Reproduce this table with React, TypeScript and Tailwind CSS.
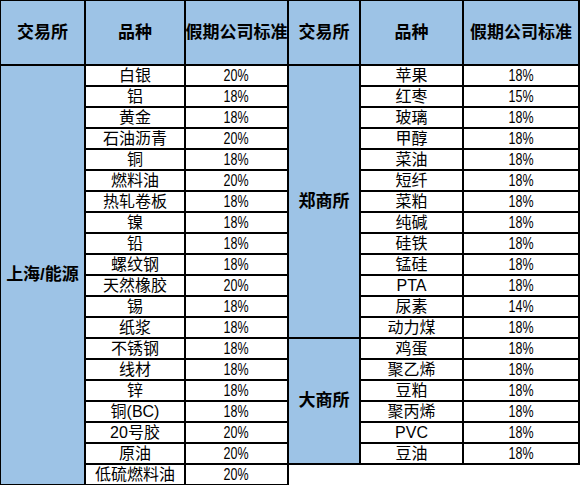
import React from "react"

const shfe: [string, string][] = [
  ["白银", "20%"],
  ["铝", "18%"],
  ["黄金", "18%"],
  ["石油沥青", "20%"],
  ["铜", "18%"],
  ["燃料油", "20%"],
  ["热轧卷板", "18%"],
  ["镍", "18%"],
  ["铅", "18%"],
  ["螺纹钢", "18%"],
  ["天然橡胶", "20%"],
  ["锡", "18%"],
  ["纸浆", "18%"],
  ["不锈钢", "18%"],
  ["线材", "18%"],
  ["锌", "18%"],
  ["铜(BC)", "18%"],
  ["20号胶", "20%"],
  ["原油", "20%"],
  ["低硫燃料油", "20%"],
]

const czce: [string, string][] = [
  ["苹果", "18%"],
  ["红枣", "15%"],
  ["玻璃", "18%"],
  ["甲醇", "18%"],
  ["菜油", "18%"],
  ["短纤", "18%"],
  ["菜粕", "18%"],
  ["纯碱", "18%"],
  ["硅铁", "18%"],
  ["锰硅", "18%"],
  ["PTA", "18%"],
  ["尿素", "14%"],
  ["动力煤", "18%"],
]

const dce: [string, string][] = [
  ["鸡蛋", "18%"],
  ["聚乙烯", "18%"],
  ["豆粕", "18%"],
  ["聚丙烯", "18%"],
  ["PVC", "18%"],
  ["豆油", "18%"],
]

const cell = "border-r-2 border-b-2 border-black flex items-center justify-center whitespace-nowrap"
const head = cell + " bg-[#9dc3e6] font-bold text-[17px]"
const body = cell + " bg-white text-[16px] leading-none"
const side = cell + " bg-[#9dc3e6] font-bold text-[17px]"

function Rows({ rows }: { rows: [string, string][] }) {
  return (
    <>
      {rows.map(([name, pct]) => (
        <React.Fragment key={name}>
          <div className={body}>{name}</div>
          <div className={body}>
            <span className="inline-block scale-x-[0.78]">{pct}</span>
          </div>
        </React.Fragment>
      ))}
    </>
  )
}

function Header() {
  return (
    <>
      <div className={head}>交易所</div>
      <div className={head}>品种</div>
      <div className={head}>假期公司标准</div>
    </>
  )
}

export default function App() {
  return (
    <div
      className="w-[581px] h-[485px] overflow-hidden bg-white text-black flex items-start"
      style={{ fontFamily: '"Liberation Sans", "Noto Sans CJK SC", sans-serif' }}
    >
      <div className="grid grid-cols-[85px_100px_103px] grid-rows-[65px_repeat(20,21px)] border-t border-l border-black">
        <Header />
        <div className={side + " row-span-20 col-start-1"}>上海/能源</div>
        <Rows rows={shfe} />
      </div>
      <div className="grid grid-cols-[72px_103px_116px] grid-rows-[65px_repeat(19,21px)] border-t border-black">
        <Header />
        <div className={side + " row-span-13 col-start-1"}>郑商所</div>
        <Rows rows={czce} />
        <div className={side + " row-span-6 col-start-1"}>大商所</div>
        <Rows rows={dce} />
      </div>
    </div>
  )
}
